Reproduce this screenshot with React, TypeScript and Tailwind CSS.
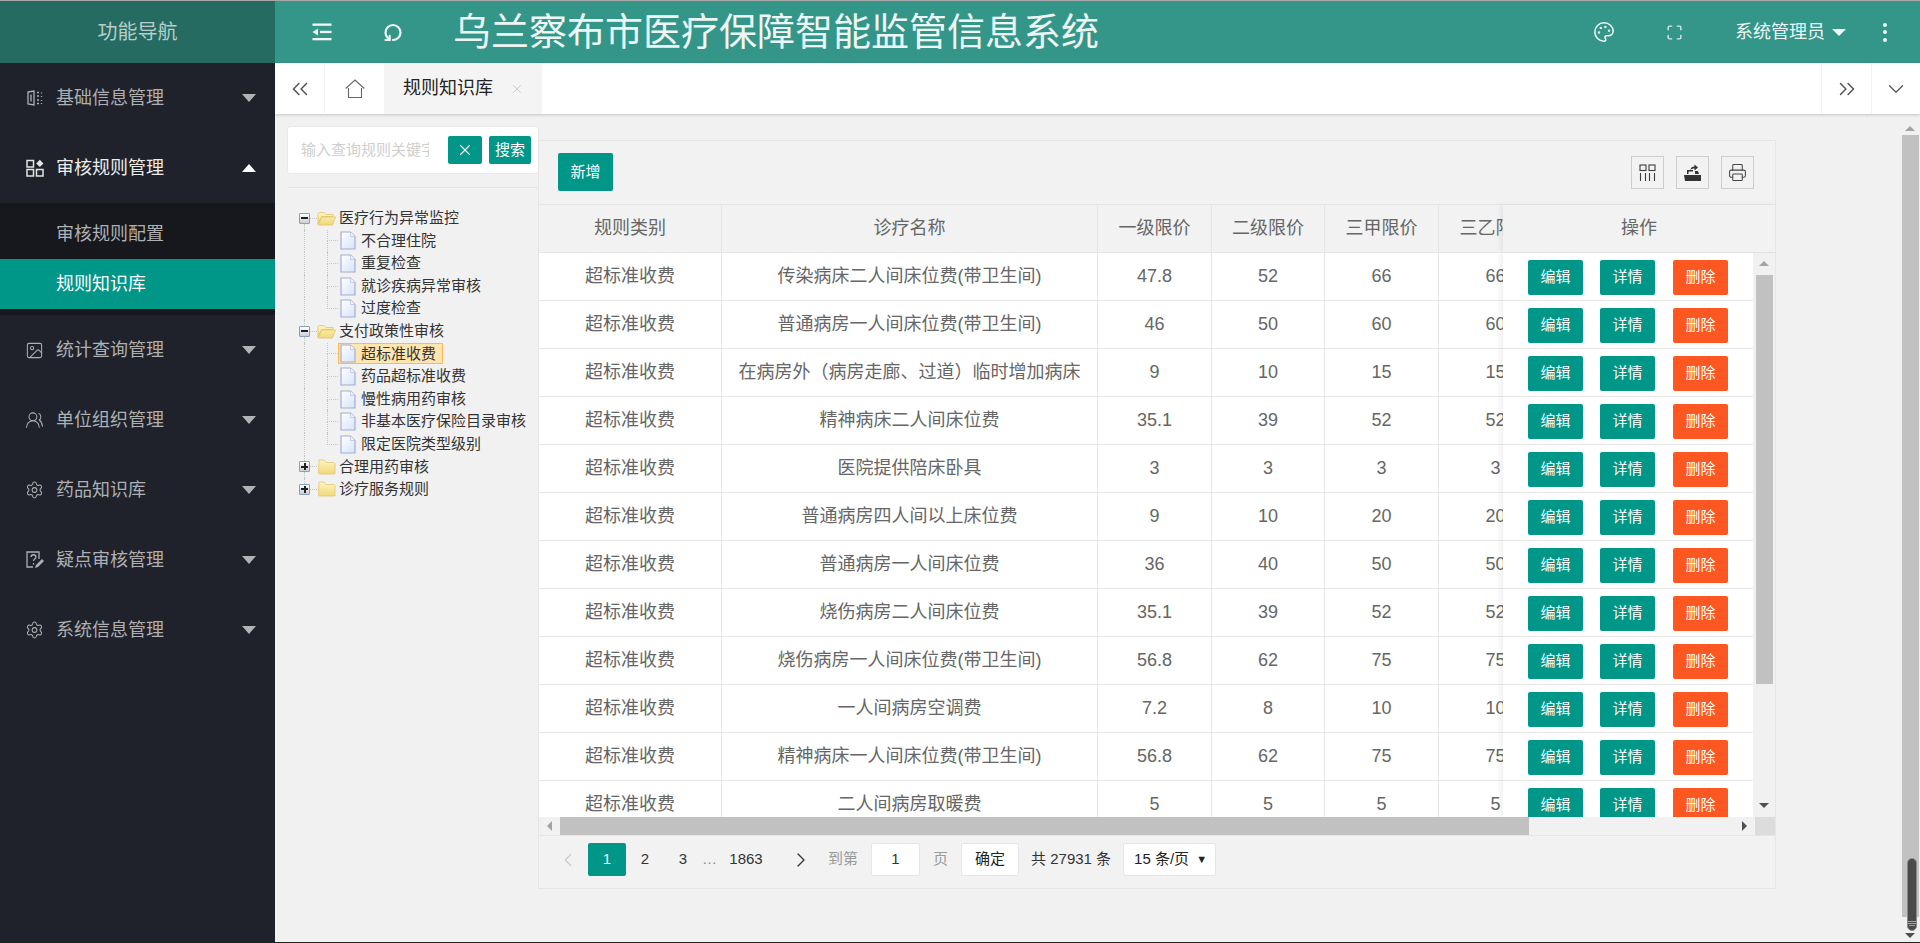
import React from "react";
import { Settings, Image as ImageIcon, UsersRound, RotateCw, Maximize, Palette, ChevronsLeft, ChevronsRight, ChevronDown, ChevronLeft, ChevronRight, X, Printer } from "lucide-react";

const Tri = ({ up }: { up?: boolean }) => (
  <div className={up ? "w-0 h-0 border-x-[7px] border-x-transparent border-b-[8px] border-b-white" : "w-0 h-0 border-x-[7px] border-x-transparent border-t-[8px] border-t-[#b2b3b5]"} />
);

const BookIco = () => (
  <svg width="18" height="18" viewBox="0 0 18 18" fill="none" stroke="#aeb0b3" strokeWidth="1.3">
    <path d="M2 3l6 -1v14l-6-1z" />
    <path d="M5 5.5v7M11 3.5h2M11 7h2M11 11h2M11 14.5h2M15.5 3.5v1M15.5 7v1M15.5 11v1M15.5 14v1" />
  </svg>
);
const GridIco = () => (
  <svg width="18" height="18" viewBox="0 0 18 18" fill="none" stroke="#e4e4e4" strokeWidth="1.5">
    <rect x="1" y="1.5" width="6.5" height="6.5" />
    <rect x="1" y="10.5" width="6.5" height="6.5" />
    <rect x="10.5" y="10.5" width="6.5" height="6.5" />
    <path d="M13.8 0.8l3.6 3.6-3.6 3.6-3.6-3.6z" fill="#e4e4e4" stroke="none" />
  </svg>
);
const QIco = () => (
  <svg width="19" height="20" viewBox="0 0 19 20" fill="none" stroke="#aeb0b3" strokeWidth="1.3">
    <path d="M8 17H2V2h12v7" />
    <path d="M6 7c0-3 5-3 5 0 0 2-2.500 2-2.500 4M8.500 13v1.500" />
    <path d="M10 18l1-3 6-6 2 2-6 6z" fill="#aeb0b3" stroke="none" />
  </svg>
);
const ShrinkIco = () => (
  <svg width="20" height="18" viewBox="0 0 20 18" fill="#f1f7f6">
    <rect x="0.500" y="0.500" width="19" height="2.300" />
    <rect x="8" y="7.800" width="11.500" height="2.300" />
    <rect x="0.500" y="15" width="19" height="2.300" />
    <path d="M0.500 9l5.500-3.500v7z" />
  </svg>
);
const DotsIco = () => (
  <div className="flex flex-col gap-[3.500px]">
    <div className="w-1 h-1 rounded-full bg-[#eef6f5]" />
    <div className="w-1 h-1 rounded-full bg-[#eef6f5]" />
    <div className="w-1 h-1 rounded-full bg-[#eef6f5]" />
  </div>
);
const HomeIco = () => (
  <svg width="20" height="20" viewBox="0 0 20 20" fill="none" stroke="#666" strokeWidth="1.100">
    <path d="M0.700 9.500L10 1l9.300 8.500" />
    <path d="M3.500 9v9.500h13V9" />
  </svg>
);
const ColsIco = () => (
  <svg width="17" height="17" viewBox="0 0 17 17" fill="none" stroke="#3d3d3d" strokeWidth="1.100">
    <rect x="1" y="1" width="6" height="5.500" />
    <rect x="10" y="1" width="6" height="5.500" />
    <path d="M1.500 9v8M6.500 9v8M10.500 9v8M15.500 9v8" />
  </svg>
);
const ExportIco = () => (
  <svg width="17" height="17" viewBox="0 0 17 17" fill="#333">
    <path d="M0 11h17v6H1z" />
    <path d="M3 10V6h6v1.500H4.500V10zM11 7h3l1 3h-4z" />
    <path d="M6.500 6c0-2.500 2-3.500 4-3.500V0.500l3.500 3-3.500 3V4.500c-2 0-3 .5-4 1.500z" />
  </svg>
);
const FolderIco = ({ open }: { open?: boolean }) => (
  <svg width="19" height="16" viewBox="0 0 19 16">
    <defs>
      <linearGradient id="fg" x1="0" y1="0" x2="0" y2="1">
        <stop offset="0" stopColor="#fff4c2" />
        <stop offset="1" stopColor="#f2d878" />
      </linearGradient>
    </defs>
    {open ? (
      <path d="M2 2.500h5l2 2h7v2H5L1 14V3.500z M0.800 14.500L4.500 7h14l-3 8H1.500z" fill="url(#fg)" stroke="#e0c36c" strokeWidth="0.800" />
    ) : (
      <path d="M2 1h5l2 2.500h8l1 1V15H2l-.500-.500z" fill="url(#fg)" stroke="#e3c872" strokeWidth="0.800" />
    )}
  </svg>
);
const DocIco = () => (
  <svg width="16" height="19" viewBox="0 0 16 19">
    <defs>
      <linearGradient id="dg" x1="0" y1="0" x2="1" y2="1">
        <stop offset="0" stopColor="#ffffff" />
        <stop offset="1" stopColor="#d4e3fb" />
      </linearGradient>
    </defs>
    <path d="M1 1h9.500L15 5.500V18H1z" fill="url(#dg)" stroke="#a8acd0" strokeWidth="1.200" />
    <path d="M10.500 1v4.500H15" fill="#eef3ff" stroke="#b9bfe0" strokeWidth="0.700" />
  </svg>
);

const menu: { label: string; icon: React.ReactNode }[] = [
  { label: "基础信息管理", icon: <BookIco /> },
  { label: "审核规则管理", icon: <GridIco /> },
  { label: "统计查询管理", icon: <ImageIcon size={19} strokeWidth={1.300} color="#aeb0b3" /> },
  { label: "单位组织管理", icon: <UsersRound size={20} strokeWidth={1.300} color="#aeb0b3" /> },
  { label: "药品知识库", icon: <Settings size={20} strokeWidth={1.300} color="#aeb0b3" /> },
  { label: "疑点审核管理", icon: <QIco /> },
  { label: "系统信息管理", icon: <Settings size={20} strokeWidth={1.300} color="#aeb0b3" /> },
];

const MenuRow = ({ label, icon, open }: { label: string; icon: React.ReactNode; open?: boolean }) => (
  <div className="h-[70px] flex items-center pl-[25px] pr-[19px]">
    <div className="w-[19px] flex justify-center">{icon}</div>
    <div className={"ml-[12px] flex-1 text-[18px] " + (open ? "text-[#ececec]" : "text-[#aeb0b3]")}>{label}</div>
    <Tri up={open} />
  </div>
);

const Sidebar = () => (
  <aside className="w-[275px] shrink-0 flex flex-col bg-[#1f222b]">
    <div className="h-[62px] flex items-center justify-center bg-[#256b62] text-[20px] text-[#b7cdc9]">功能导航</div>
    <MenuRow {...menu[0]} />
    <MenuRow {...menu[1]} open />
    <div className="bg-[#17181e] pt-[6px] pb-[6px]">
      <div className="h-[50px] flex items-center pl-[56px] text-[18px] text-[#aeb0b3]">审核规则配置</div>
      <div className="h-[50px] flex items-center pl-[56px] text-[18px] text-white bg-[#009688]">规则知识库</div>
    </div>
    {menu.slice(2).map((m) => (
      <MenuRow key={m.label} {...m} />
    ))}
  </aside>
);

const Header = () => (
  <header className="h-[62px] flex items-center bg-[#349689] text-[#eef6f5]">
    <div className="ml-[37px] w-[20px] flex"><ShrinkIco /></div>
    <div className="ml-[51px] w-[20px] flex"><RotateCw size={21} strokeWidth={2.600} color="#f1f7f6" className="-scale-y-100 rotate-90" /></div>
    <div className="ml-[50px] text-[38px] leading-none text-[#eef6f5] whitespace-nowrap">乌兰察布市医疗保障智能监管信息系统</div>
    <div className="flex-1" />
    <Palette size={22} strokeWidth={1.700} color="#eef6f5" />
    <div className="ml-[51px]"><Maximize size={17} strokeWidth={2} color="#d6e8e5" /></div>
    <div className="ml-[52px] text-[18px] whitespace-nowrap">系统管理员</div>
    <div className="ml-[7px] w-0 h-0 border-x-[7px] border-x-transparent border-t-[7px] border-t-[#f1f7f6]" />
    <div className="ml-[37px] mr-[33px]"><DotsIco /></div>
  </header>
);

const TabBar = () => (
  <div className="h-[51px] flex bg-white shadow-[0_1px_3px_rgba(0,0,0,0.18)] relative z-10">
    <div className="w-[50px] flex items-center justify-center border-r border-[#f2f2f2]"><ChevronsLeft size={26} strokeWidth={1.400} color="#555" /></div>
    <div className="w-[59px] flex items-center justify-center"><HomeIco /></div>
    <div className="w-[158px] flex items-center bg-[#f4f4f4] pl-[19px]">
      <span className="text-[18px] text-[#222]">规则知识库</span>
      <X size={14} strokeWidth={1.400} color="#c4c4c4" className="ml-[17px]" />
    </div>
    <div className="flex-1" />
    <div className="w-[50px] flex items-center justify-center border-l border-[#f2f2f2]"><ChevronsRight size={26} strokeWidth={1.400} color="#555" /></div>
    <div className="w-[49px] flex items-center justify-center border-l border-[#f2f2f2]"><ChevronDown size={26} strokeWidth={1.200} color="#555" /></div>
  </div>
);

const Toggle = ({ open }: { open?: boolean }) => (
  <div className="w-[11px] h-[11px] shrink-0 border border-[#8a9fb8] rounded-[1px] bg-gradient-to-b from-white to-[#c9cfd6] flex items-center justify-center relative">
    <div className="w-[7px] h-[2px] bg-[#222]" />
    {!open && <div className="w-[2px] h-[7px] bg-[#222] absolute" />}
  </div>
);

const dotV = "border-l border-dotted border-[#c4c4c4]";

const ParentRow = ({ label, open, first, last }: { label: string; open?: boolean; first?: boolean; last?: boolean }) => (
  <div className="h-[22.600px] flex items-center">
    <div className="w-[11px] self-stretch flex flex-col items-center">
      <div className={"flex-1 w-px " + (first ? "" : dotV)} />
      <Toggle open={open} />
      <div className={"flex-1 w-px " + (last ? "" : dotV)} />
    </div>
    <div className="w-[7px] border-t border-dotted border-[#c4c4c4]" />
    <FolderIco open={open} />
    <span className="ml-[3px] text-[15px] text-[#333] whitespace-nowrap">{label}</span>
  </div>
);

const ChildRow = ({ label, last, selected }: { label: string; last?: boolean; selected?: boolean }) => (
  <div className="h-[22.600px] flex items-center">
    <div className="w-[11px] self-stretch flex justify-center">
      <div className={"w-px " + dotV} />
    </div>
    <div className="w-[17px]" />
    <div className="w-[11px] self-stretch flex flex-col">
      <div className={"flex-1 border-b border-dotted border-[#c4c4c4] " + dotV} />
      <div className={"flex-1 " + (last ? "" : dotV)} />
    </div>
    <div className={"flex items-center h-[21px] pl-[1px] pr-[6px] border " + (selected ? "bg-[#ffe6b0] border-[#ffb951]" : "border-transparent")}>
      <DocIco />
      <span className="ml-[5px] text-[15px] text-[#333] whitespace-nowrap">{label}</span>
    </div>
  </div>
);

const TreePanel = () => (
  <div className="w-[250px] shrink-0 flex flex-col">
    <div className="h-[46px] mt-[13px] flex items-center bg-white rounded-[2px] shadow-[0_0_2px_rgba(0,0,0,0.12)] pl-[13px]">
      <div className="w-[128px] overflow-hidden whitespace-nowrap text-[15px] text-[#cfcfcf]">输入查询规则关键字</div>
      <div className="ml-[19px] w-[34px] h-[28px] flex items-center justify-center rounded-[2px] bg-[#009688]"><X size={18} strokeWidth={1.500} color="#fff" /></div>
      <div className="ml-[7px] w-[42px] h-[28px] flex items-center justify-center rounded-[2px] bg-[#009688] text-[15px] text-white whitespace-nowrap">搜索</div>
    </div>
    <div className="mt-[14px] h-px bg-[#e4e4e4]" />
    <div className="pt-[19px] pl-[11px]">
      <ParentRow label="医疗行为异常监控" open first />
      <ChildRow label="不合理住院" />
      <ChildRow label="重复检查" />
      <ChildRow label="就诊疾病异常审核" />
      <ChildRow label="过度检查" last />
      <ParentRow label="支付政策性审核" open />
      <ChildRow label="超标准收费" selected />
      <ChildRow label="药品超标准收费" />
      <ChildRow label="慢性病用药审核" />
      <ChildRow label="非基本医疗保险目录审核" />
      <ChildRow label="限定医院类型级别" last />
      <ParentRow label="合理用药审核" />
      <ParentRow label="诊疗服务规则" last />
    </div>
  </div>
);

const rows: string[][] = [
  ["传染病床二人间床位费(带卫生间)", "47.8", "52", "66", "66"],
  ["普通病房一人间床位费(带卫生间)", "46", "50", "60", "60"],
  ["在病房外（病房走廊、过道）临时增加病床", "9", "10", "15", "15"],
  ["精神病床二人间床位费", "35.1", "39", "52", "52"],
  ["医院提供陪床卧具", "3", "3", "3", "3"],
  ["普通病房四人间以上床位费", "9", "10", "20", "20"],
  ["普通病房一人间床位费", "36", "40", "50", "50"],
  ["烧伤病房二人间床位费", "35.1", "39", "52", "52"],
  ["烧伤病房一人间床位费(带卫生间)", "56.8", "62", "75", "75"],
  ["一人间病房空调费", "7.2", "8", "10", "10"],
  ["精神病床一人间床位费(带卫生间)", "56.8", "62", "75", "75"],
  ["二人间病房取暖费", "5", "5", "5", "5"],
];

const gridCols = "grid grid-cols-[183px_376px_114px_113px_114px_114px] w-[1014px]";
const cell = "flex items-center justify-center border-r border-b border-[#e6e6e6] whitespace-nowrap";

const ToolBtn = ({ children }: { children: React.ReactNode }) => (
  <div className="w-[33px] h-[33px] flex items-center justify-center border border-[#ccc]">{children}</div>
);

const ArrowBtn = ({ dir }: { dir: "up" | "down" | "left" | "right" }) => {
  const cls = {
    up: "border-x-[5px] border-x-transparent border-b-[5px] border-b-[#a3a3a3]",
    down: "border-x-[5px] border-x-transparent border-t-[5px] border-t-[#505050]",
    left: "border-y-[5px] border-y-transparent border-r-[5px] border-r-[#a3a3a3]",
    right: "border-y-[5px] border-y-transparent border-l-[5px] border-l-[#505050]",
  }[dir];
  return <div className={"w-0 h-0 " + cls} />;
};

const TableArea = () => (
  <div className="h-[565px] flex overflow-hidden">
    <div className="flex-1 overflow-hidden bg-white text-[18px] text-[#666]">
      <div className={gridCols + " h-[48px] bg-[#f2f2f2] hidden"} />
      {rows.map((r, i) => (
        <div key={i} className={gridCols + " h-[48px] shrink-0"}>
          <div className={cell}>超标准收费</div>
          {r.map((c, j) => (
            <div key={j} className={cell}>{c}</div>
          ))}
        </div>
      ))}
    </div>
    <div className="w-[272px] shrink-0 flex shadow-[-3px_0_5px_rgba(0,0,0,0.06)] relative">
      <div className="w-[250px] bg-white">
        {rows.map((_, i) => (
          <div key={i} className="h-[48px] shrink-0 flex pl-[25px] pt-[7px] border-b border-[#e6e6e6] gap-[17px]">
            <div className="w-[55px] h-[35px] flex items-center justify-center rounded-[2px] bg-[#009688] text-[15px] text-white">编辑</div>
            <div className="w-[55px] h-[35px] flex items-center justify-center rounded-[2px] bg-[#009688] text-[15px] text-white">详情</div>
            <div className="ml-px w-[55px] h-[35px] flex items-center justify-center rounded-[2px] bg-[#ff5722] text-[15px] text-white">删除</div>
          </div>
        ))}
      </div>
      <div className="w-[22px] bg-[#f1f1f1] flex flex-col items-center">
        <div className="h-[22px] flex items-center justify-center"><ArrowBtn dir="up" /></div>
        <div className="w-[17px] h-[409px] bg-[#c1c1c1]" />
        <div className="flex-1" />
        <div className="h-[22px] mb-[1px] flex items-center justify-center"><ArrowBtn dir="down" /></div>
      </div>
    </div>
  </div>
);

const PageText = ({ children, className = "" }: { children: React.ReactNode; className?: string }) => (
  <div className={"text-[15px] whitespace-nowrap " + className}>{children}</div>
);

const Pager = () => (
  <div className="h-[52px] flex items-center pl-[20px] pb-[5px] text-[#333]">
    <ChevronLeft size={22} strokeWidth={1.300} color="#c9c9c9" className="mr-[5px] -ml-[2px]" />
    <div className="ml-[4px] w-[38px] h-[33px] flex items-center justify-center rounded-[2px] bg-[#009688] text-white text-[15px]">1</div>
    <PageText className="w-[38px] text-center">2</PageText>
    <PageText className="w-[38px] text-center">3</PageText>
    <PageText className="w-[11px] text-center text-[#888]">…</PageText>
    <PageText className="w-[66px] text-center">1863</PageText>
    <ChevronRight size={24} strokeWidth={1.300} color="#333" className="ml-[10px]" />
    <PageText className="ml-[15px] text-[#999]">到第</PageText>
    <div className="ml-[13px] w-[49px] h-[33px] flex items-center justify-center bg-white border border-[#e6e6e6] rounded-[2px] text-[15px]">1</div>
    <PageText className="ml-[13px] text-[#999]">页</PageText>
    <div className="ml-[13px] w-[58px] h-[33px] flex items-center justify-center bg-white border border-[#e6e6e6] rounded-[2px] text-[15px] text-[#222]">确定</div>
    <PageText className="ml-[12px]">共 27931 条</PageText>
    <div className="ml-[12px] w-[93px] h-[33px] flex items-center justify-between pl-[10px] pr-[8px] bg-white border border-[#e6e6e6] rounded-[2px] text-[15px] text-[#222] whitespace-nowrap">
      <span>15 条/页</span>
      <span className="text-[11px]">▼</span>
    </div>
  </div>
);

const TablePanel = () => (
  <div className="w-[1238px] shrink-0 h-[749px] mt-[26px] border border-[#e6e6e6] flex flex-col bg-[#f2f2f2]">
    <div className="h-[64px] flex items-center justify-between pl-[19px] pr-[21px] border-b border-[#e6e6e6]">
      <div className="w-[55px] h-[38px] flex items-center justify-center rounded-[2px] bg-[#009688] text-white text-[15px]">新增</div>
      <div className="flex gap-[12px]">
        <ToolBtn><ColsIco /></ToolBtn>
        <ToolBtn><ExportIco /></ToolBtn>
        <ToolBtn><Printer size={19} strokeWidth={1.300} color="#444" /></ToolBtn>
      </div>
    </div>
    <div className="h-[48px] flex text-[18px] text-[#666] border-b border-[#e6e6e6]">
      <div className="flex-1 overflow-hidden">
        <div className={gridCols + " h-full"}>
          {["规则类别", "诊疗名称", "一级限价", "二级限价", "三甲限价", "三乙限价"].map((h) => (
            <div key={h} className="flex items-center justify-center border-r border-[#e6e6e6] whitespace-nowrap">{h}</div>
          ))}
        </div>
      </div>
      <div className="w-[272px] shrink-0 flex items-center justify-center shadow-[-3px_0_5px_rgba(0,0,0,0.06)]">操作</div>
    </div>
    <TableArea />
    <div className="h-[19px] flex border-b border-[#e6e6e6]">
      <div className="flex-1 flex items-center bg-[#f1f1f1]">
        <div className="w-[21px] flex justify-center"><ArrowBtn dir="left" /></div>
        <div className="w-[969px] h-full bg-[#c1c1c1]" />
        <div className="flex-1" />
        <div className="w-[22px] flex justify-center"><ArrowBtn dir="right" /></div>
      </div>
      <div className="w-[20px] bg-[#dcdcdc]" />
    </div>
    <Pager />
  </div>
);

const PageScroll = () => (
  <div className="w-[20px] shrink-0 flex flex-col items-center relative">
    <div className="h-[21px] flex items-end justify-center pb-[4px]"><ArrowBtn dir="up" /></div>
    <div className="w-[17px] h-[782px] bg-[#c1c1c1]" />
    <div className="flex-1" />
    <div className="mb-[4px]"><ArrowBtn dir="down" /></div>
    <div className="absolute left-[7px] bottom-[11px] w-[10px] h-[73px] rounded-full bg-[#4a4a4a] border border-[#8a8a8a] flex flex-col justify-end items-center gap-[1px] pb-[4px]">
      <div className="w-[8px] h-px bg-[#4ade5a]" />
      <div className="w-[8px] h-px bg-[#4ade5a]" />
      <div className="w-[6px] h-px bg-[#4ade5a]" />
    </div>
  </div>
);

export default function App() {
  return (
    <div className="w-[1920px] h-[943px] flex flex-col overflow-hidden font-['Liberation_Sans','Noto_Sans_CJK_SC',sans-serif]">
      <div className="h-px bg-[#a8a8a8]" />
      <div className="flex-1 flex min-h-0">
        <Sidebar />
        <div className="flex-1 flex flex-col min-w-0 bg-[#f1f1f1]">
          <Header />
          <TabBar />
          <div className="flex-1 flex min-h-0">
            <div className="flex-1 flex pl-[13px]">
              <TreePanel />
              <TablePanel />
            </div>
            <PageScroll />
          </div>
        </div>
      </div>
      <div className="h-px bg-[#222]" />
    </div>
  );
}
